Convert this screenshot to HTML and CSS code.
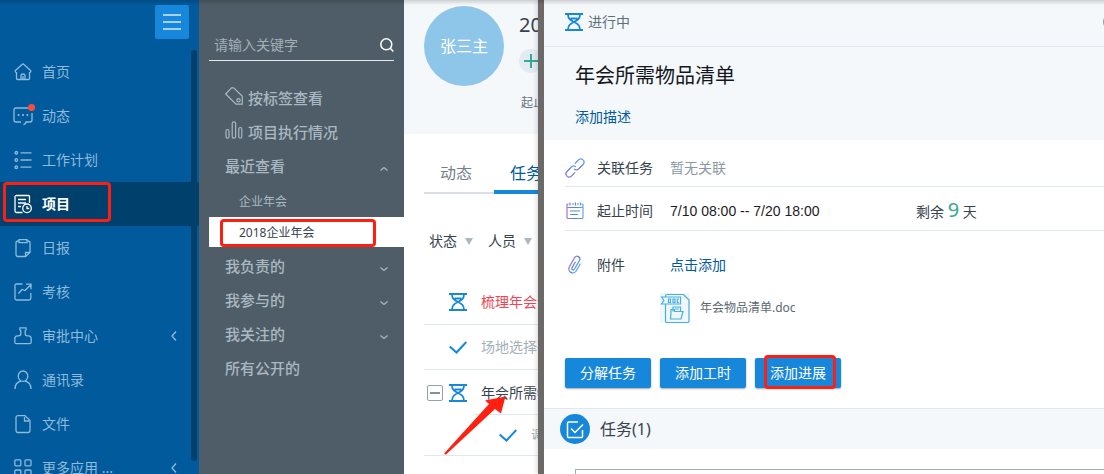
FILE: index.html
```html
<!DOCTYPE html>
<html lang="zh-CN">
<head>
<meta charset="utf-8">
<title>项目</title>
<link rel="stylesheet" href="styles.css">
</head>
<body>
<svg class="defs" aria-hidden="true">
  <symbol id="hourglass" viewBox="0 0 18 18"><path d="M0 1h18M0 17h18M3 1.500c0 9 12 6 12 15M15 1.500c0 9-12 6-12 15M5.500 5.500h7" fill="none" stroke="currentColor" stroke-width="1.800"/></symbol>
  <symbol id="check" viewBox="0 0 18 18"><path d="M.7 8.500l6.800 6L17.300 4" fill="none" stroke="currentColor" stroke-width="2"/></symbol>
  <symbol id="left" viewBox="0 0 6 10"><path d="M5 .5L1 5l4 4.500" fill="none" stroke="currentColor" stroke-width="1.300"/></symbol>
  <symbol id="down" viewBox="0 0 8 8"><path d="M.5 2.500l3.500 3 3.500-3" fill="none" stroke="currentColor" stroke-width="1.300"/></symbol>
</svg>
<div class="app">
  <aside class="sidebar">
    <div class="sidebar-top">
      <button class="menu-btn" type="button" aria-label="菜单"><span></span><span></span><span></span></button>
    </div>
    <nav class="nav">
      <a class="nav-item" href="#"><svg class="nav-icon" viewBox="0 0 18 18"><path d="M8 1.500q1-1 2 0l6.500 6q.8 1-.3 1.800l-.7.400v5.800q0 1-1 1H3.500q-1 0-1-1V9.700l-.7-.4q-1.100-.8-.3-1.800zM7 16.500v-4q0-1.500 2-1.500t2 1.500v4M9 13v3"/></svg>首页</a>
      <a class="nav-item" href="#"><svg class="nav-icon wide" viewBox="0 0 20 18"><path d="M15 1H3Q1 1 1 3v10q0 2 2 2h5M19 6v7q0 2-2 2h-4q0 2-2.500 2.500"/><path class="dots" d="M5.500 8h.1M10 8h.1M14.300 8h.1"/></svg>动态<span class="dot"></span></a>
      <a class="nav-item" href="#"><svg class="nav-icon" viewBox="0 0 18 18"><circle cx="2.300" cy="1.800" r="1.300"/><circle cx="2.300" cy="9" r="1.300"/><circle cx="2.300" cy="16.200" r="1.300"/><path d="M6.500 1.800h11M6.500 9h11M6.500 16.200h11"/></svg>工作计划</a>
      <a class="nav-item active" href="#"><svg class="nav-icon" viewBox="0 0 18 18"><path d="M15.500 8V1.500q0-1-1-1h-12q-1.500 0-1.500 1.500v14q0 1.500 1.500 1.500h6M4 4.500h8M4 8h8M4 11.500h3"/><circle cx="13" cy="13.300" r="4.300"/><path d="M13 11v2.500h2.200"/></svg>项目<span class="mark mark-nav"></span></a>
      <a class="nav-item" href="#"><svg class="nav-icon" viewBox="0 0 18 18"><path d="M5 2H4Q2 2 2 4v11.500q0 2 2 2h7.500l4.500-4V4q0-2-2-2h-1M5 .7h8v3H5zM11.500 17v-3.500H16"/></svg>日报</a>
      <a class="nav-item" href="#"><svg class="nav-icon" viewBox="0 0 18 18"><path d="M8.500 1H2.500Q1 1 1 2.500v13Q1 17 2.500 17h12.500q1.800 0 1.800-1.500V10M4.500 10.500L8 6.500l3 1L17 1.500M12 1.200h5v5"/></svg>考核</a>
      <a class="nav-item" href="#"><svg class="nav-icon" viewBox="0 0 18 18"><path d="M6 .8h6q1 1.500-.8 3v2.700q0 2.300 2 2.300h1.300q2.700 0 2.700 3V15q0 1.700-1.700 1.700h-13Q.8 16.700.8 15v-3.200q0-3 2.700-3h1.300q2 0 2-2.300V3.800Q5 2.300 6 .8z"/></svg>审批中心<svg class="nav-arrow"><use href="#left"/></svg></a>
      <a class="nav-item" href="#"><svg class="nav-icon" viewBox="0 0 18 18"><ellipse cx="9" cy="5.200" rx="4.800" ry="5.200"/><path d="M1 18q0-6.500 6-8M17 18q0-6.500-6-8"/></svg>通讯录</a>
      <a class="nav-item" href="#"><svg class="nav-icon" viewBox="0 0 18 18"><path d="M11 .6H4Q2 .6 2 2.600v13q0 1.900 2 1.900h10q2 0 2-1.900V5.500zM10.500 2v4H15"/></svg>文件</a>
      <a class="nav-item" href="#"><svg class="nav-icon" viewBox="0 0 18 18"><rect x=".8" y=".8" width="6" height="6" rx="1"/><rect x="11" y=".8" width="6" height="6" rx="1"/><rect x=".8" y="11" width="6" height="6" rx="1"/><rect x="11" y="11" width="6" height="6" rx="1"/></svg>更多应用 ...<svg class="nav-arrow"><use href="#left"/></svg></a>
    </nav>
    <span class="scrollbar"></span>
  </aside>

  <aside class="submenu">
    <form class="search">
      <input type="text" placeholder="请输入关键字" aria-label="搜索关键字">
      <button type="button" aria-label="搜索"><svg viewBox="0 0 14 14"><circle cx="6.300" cy="6.300" r="5.500"/><path d="M10.300 10.300L13.300 13.500"/></svg></button>
    </form>
    <nav class="groups">
      <a class="group" href="#"><svg class="group-icon" viewBox="0 0 18 18"><path d="M.7 7L6.500.8h2.200l8.600 8.500v7.900H11z"/><circle cx="13.500" cy="13.300" r="1.700"/></svg>按标签查看</a>
      <a class="group" href="#"><svg class="group-icon" viewBox="0 0 18 18"><rect x="1" y="8.500" width="3" height="8.700" rx="1.500"/><rect x="7.200" y=".8" width="3.400" height="16.400" rx="1.600"/><rect x="13.800" y="6.500" width="3" height="10.700" rx="1.500"/></svg>项目执行情况</a>
      <a class="group" href="#">最近查看<svg class="chev up"><use href="#down"/></svg></a>
      <div class="recent">
        <a href="#">企业年会</a>
        <a class="selected" href="#">2018企业年会<span class="mark mark-sub"></span></a>
      </div>
      <a class="group" href="#">我负责的<svg class="chev"><use href="#down"/></svg></a>
      <a class="group" href="#">我参与的<svg class="chev"><use href="#down"/></svg></a>
      <a class="group" href="#">我关注的<svg class="chev"><use href="#down"/></svg></a>
      <a class="group" href="#">所有公开的</a>
    </nav>
  </aside>

  <main class="project">
    <header class="project-head">
      <div class="avatar">张三主</div>
      <div class="project-info">
        <h1>2018</h1>
        <button class="add" type="button" aria-label="添加"></button>
        <p>起止</p>
      </div>
    </header>
    <nav class="tabs"><a href="#">动态</a><a class="current" href="#">任务</a></nav>
    <div class="filters"><button type="button">状态</button><button type="button">人员</button></div>
    <ul class="tasks">
      <li><svg class="state"><use href="#hourglass"/></svg><span class="late">梳理年会流</span></li>
      <li><svg class="state"><use href="#check"/></svg><span class="done">场地选择确</span></li>
      <li class="parent"><button class="collapse" type="button" aria-label="收起"></button><svg class="state"><use href="#hourglass"/></svg><span>年会所需物</span>
        <svg class="pointer" viewBox="0 0 64 60"><path d="M.5 57L45 8 41 4.500 61.500.5 57 17.500 51 13 2 58.500Q0 59 .5 57z"/></svg></li>
      <li class="child"><svg class="state"><use href="#check"/></svg><span class="done">调</span></li>
    </ul>
  </main>

  <section class="drawer">
    <header class="drawer-head"><svg class="state"><use href="#hourglass"/></svg><span>进行中</span><button class="close" type="button" aria-label="关闭"></button></header>
    <div class="summary">
      <h2>年会所需物品清单</h2>
      <a href="#">添加描述</a>
    </div>
    <svg class="defs" aria-hidden="true"><linearGradient id="tint" x1="0" y1="0" x2="1" y2="0"><stop offset="0" stop-color="#9a78dc"/><stop offset=".5" stop-color="#4f83d8"/><stop offset="1" stop-color="#68a6ec"/></linearGradient></svg>
    <dl class="fields">
      <div class="field linked">
        <dt><svg class="field-icon" viewBox="0 0 18 18"><g transform="rotate(-45 9 9)"><path d="M6 12.200H.8a3.200 3.200 0 0 1 0-6.400h6.400a3.200 3.200 0 0 1 3.200 3.200"/><path d="M12 5.800h5.200a3.200 3.200 0 0 1 0 6.400h-6.400A3.200 3.200 0 0 1 7.600 9"/></g></svg>关联任务</dt>
        <dd class="muted">暂无关联</dd>
      </div>
      <div class="field">
        <dt><svg class="field-icon" viewBox="0 0 18 18"><path d="M2.500 2H2Q1 2 1 3v12.500q0 1 1 1h14q1 0 1-1V3q0-1-1-1h-.5M6 2h2M11 2h2M4 .5v3M9.500.5v3M14.500.5v3M1 5.500h16M4 9h10M4 12.500h8"/></svg>起止时间</dt>
        <dd class="time">7/10 08:00 -- 7/20 18:00</dd>
        <dd class="left">剩余 <strong>9</strong> 天</dd>
      </div>
      <div class="field files">
        <dt><svg class="field-icon" viewBox="0 0 18 18"><path transform="rotate(30 9 9)" d="M13 5v8.500a4 4 0 0 1-8 0V2.800a2.800 2.800 0 0 1 5.600 0V13a1.400 1.400 0 0 1-2.800 0V6"/></svg>附件</dt>
        <dd><a href="#">点击添加</a></dd>
      </div>
    </dl>
    <div class="file">
      <svg viewBox="0 0 30 30"><path class="paper" d="M0 0h30v30H0z"/><path d="M5.500 4V3q0-1.500 1.500-1.500h16.500L29 7v21q0 1.500-1.500 1.500H7q-1.500 0-1.500-1.500V11.500M1.500 4h19v7h-19L4 7.500zM11 19.500v-3h3.500v2h8.500l-2 7.500H10.500zM13 18.500V14h7.500v4.500M15 16h4"/><path class="tag" d="M8.500 6h2v3.500h-2zM13 6h2v3.500h-2zM19 6h-1.700v3.500H19"/></svg>
      <span>年会物品清单.doc</span>
    </div>
    <div class="actions">
      <button type="button">分解任务</button>
      <button type="button">添加工时</button>
      <button type="button">添加进展<span class="mark mark-btn"></span></button>
    </div>
    <div class="section-head">
      <svg viewBox="0 0 30 30"><circle cx="15" cy="15" r="15"/><path d="M18 8H8.500q-1 0-1 1v13.500q0 1 1 1h13q1 0 1-1V16M11 14.500l4 4 8-8"/></svg>
      <h3>任务(1)</h3>
    </div>
    <input class="new-task" type="text" aria-label="任务名称">
  </section>
</div>
</body>
</html>
```
FILE: styles.css
```css
* { box-sizing: border-box; }
body, h1, h2, h3, p, ul, dl, dd { margin: 0; padding: 0; }
body { font: 14px/20px "Noto Sans", "Noto Sans CJK SC", sans-serif; color: #36434d; background: #fff; overflow: hidden; }
a { color: inherit; text-decoration: none; }
button, input { font: inherit; color: inherit; border: 0; padding: 0; background: none; }
ul { list-style: none; }
h1, h2, h3, strong { font-weight: 400; }
svg { flex: none; }
.defs { position: absolute; width: 0; height: 0; }

.app { position: relative; display: grid; grid-template-columns: 199px 205px 134px 1fr; height: 100vh; overflow: hidden; }
.app::after { content: ""; position: absolute; z-index: 2; inset: 0 0 auto; height: 5px; background: linear-gradient(rgba(0, 0, 0, .16), transparent); }

/* Primary navigation */
.sidebar { position: relative; background: #005a9b; color: #8fbbdc; overflow: hidden; }
.sidebar-top { display: flex; justify-content: flex-end; height: 50px; padding: 5px 10px 0 0; }
.menu-btn { display: flex; flex-direction: column; align-items: center; justify-content: center; gap: 5px; width: 34px; height: 34px; border-radius: 2px; background: #1787dc; }
.menu-btn span { width: 18px; height: 2px; background: #a5d2f3; }
.nav-item { position: relative; display: flex; align-items: center; gap: 10px; height: 44px; padding: 0 22px 0 14px; }
.nav-icon { width: 18px; height: 18px; overflow: visible; fill: none; stroke: currentColor; stroke-width: 1.3; }
.nav-icon.wide { width: 20px; margin: 0 -1px; }
.nav-icon .dots { stroke-width: 2; stroke-linecap: round; }
.nav-item.active { background: #00406d; color: #fff; font-weight: 700; }
.nav-arrow { width: 6px; height: 10px; margin-left: auto; }
.dot { position: absolute; left: 28px; top: 10px; width: 7px; height: 7px; border-radius: 50%; background: #ff4b3e; }
.scrollbar { position: absolute; right: 2px; top: 50px; bottom: 13px; width: 6px; border-radius: 3px; background: #00406b; }
.mark { position: absolute; border: 3px solid #ff1e12; border-radius: 4px; }
.mark-nav { left: 3px; top: 0; width: 108px; height: 40px; }
.mark-sub { left: 11px; top: 2px; width: 156px; height: 28px; }
.mark-btn { left: 9px; right: 5px; top: -3px; bottom: -1px; }

/* Project list */
.submenu { padding-left: 10px; background: #4e5d67; color: #a9b8c1; }
.search { display: flex; align-items: center; height: 31px; margin: 30px 10px 20px 0; padding-left: 5px; border-bottom: 1px solid #e4e8ea; }
.search input { flex: 1; min-width: 0; outline: 0; }
.search input::placeholder { color: #a3b0b8; opacity: 1; }
.search button { display: flex; }
.search svg { width: 14px; height: 14px; fill: none; stroke: #fff; stroke-width: 1.5; }
.group { display: flex; align-items: center; gap: 5px; height: 34px; padding: 0 16px 0 16px; font-size: 15px; font-weight: 500; }
.group-icon { width: 18px; height: 18px; margin-bottom: 4px; fill: none; stroke: currentColor; stroke-width: 1.2; }
.chev { width: 8px; height: 8px; margin: 6px 0 0 auto; }
.chev.up { transform: rotate(180deg); }
.recent { padding: 4px 0 2px; font-size: 12px; }
.recent a { position: relative; display: block; padding-left: 30px; line-height: 30px; }
.recent .selected { padding-top: 2px; line-height: 28px; background: #fff; color: #36434d; }

/* Project page */
.project { overflow: hidden; white-space: nowrap; }
.project-head { display: flex; gap: 15px; height: 134px; padding: 6px 0 0 20px; background: #f4f8fb; }
.avatar { flex: none; display: grid; place-items: center; width: 80px; height: 80px; border-radius: 50%; background: #8dc6e9; color: #fff; font-size: 16px; }
.project-info { min-width: 0; overflow: hidden; }
.project-info h1 { height: 43px; font-size: 20px; line-height: 38px; }
.add { display: block; width: 24px; height: 24px; border-radius: 50%; background: linear-gradient(#38a893, #38a893) center / 14px 2px no-repeat, linear-gradient(#38a893, #38a893) center / 2px 14px no-repeat, #e3ebf2; }
.project-info p { padding: 20px 0 0 2px; font-size: 12px; color: #65727c; }
.tabs { display: flex; height: 60px; padding: 20px 0 0 20px; font-size: 16px; color: #75818a; }
.tabs a { flex: none; width: 70px; padding-left: 16px; line-height: 38px; border-bottom: 2px solid #dae0e5; }
.tabs .current { color: #005a9b; border-bottom: 4px solid #1787dc; }
.filters { display: flex; gap: 15px; height: 86px; padding: 37px 0 0 25px; }
.filters button { flex: none; display: flex; align-items: center; gap: 8px; height: 20px; }
.filters button::after { content: ""; border: 4px solid transparent; border-top: 7px solid #a9b8c1; border-bottom: 0; }
.tasks { padding-left: 20px; }
.tasks li { position: relative; display: flex; align-items: center; height: 45px; padding-left: 25px; border-bottom: 1px solid #dfe8ee; }
.state { width: 18px; height: 18px; margin-right: 14px; color: #1787dc; }
.tasks .late { color: #f04552; }
.tasks .done { color: #a3b0b8; }
.tasks .parent { padding-left: 3px; border-bottom: 0; }
.tasks .child { height: 41px; padding-left: 75px; font-size: 12px; }
.child::before { content: ""; position: absolute; left: 50px; right: 0; top: -1px; border-top: 1px solid #dfe8ee; }
.collapse { flex: none; width: 16px; height: 16px; margin-right: 6px; border: 1px solid #91a2ac; border-radius: 2px; background: linear-gradient(#81929d, #81929d) center / 10px 2px no-repeat; }
.pointer { position: absolute; z-index: 1; left: 20px; top: 26px; width: 64px; height: 60px; fill: #ff2012; }

/* Task drawer */
.drawer { border-left: 6px solid #6c6a68; background: #fff; overflow: hidden; box-shadow: -2px 0 4px rgba(0, 0, 0, .12); z-index: 1; }
.drawer-head { display: flex; align-items: center; height: 47px; padding: 0 0 2px 21px; border-bottom: 1px solid #dfe8ee; background: #f4f8fb; color: #63707a; }
.drawer-head .state { margin-right: 5px; }
.close { width: 16px; height: 16px; margin: 0 -15px 0 auto; flex: none; border: 2px solid #9a9a9a; border-radius: 50%; }
.summary { height: 93px; padding: 14px 31px 0; background: #f4f8fb; }
.summary h2 { color: #12171b; font-size: 20px; line-height: 30px; }
.summary a { display: block; padding-top: 16px; }
.summary a, .files a { color: #005a9b; }
.fields { padding-left: 21px; }
.field { display: flex; align-items: center; height: 44px; padding-top: 4px; border-bottom: 1px solid #dfe8ee; }
.field.linked { height: 47px; padding-top: 10px; }
.field.files { height: 62px; padding-top: 6px; border: 0; }
.field dt { display: flex; align-items: center; width: 105px; }
.field-icon { width: 18px; height: 18px; margin: 0 13px 0 1px; overflow: visible; fill: none; stroke: url(#tint); stroke-width: 1.2; }
.muted { color: #8c99a2; }
.time { width: 246px; color: #1c2024; font-family: "Liberation Sans", sans-serif; }
.left strong { font: 20px/20px "Noto Sans", sans-serif; color: #38a893; }
.file { display: flex; align-items: center; gap: 10px; padding-left: 116px; font-size: 12px; color: #5d6a74; }
.file svg { width: 30px; height: 30px; fill: none; stroke: #43b2dc; stroke-width: 1.2; }
.file .paper { fill: #f1f6f9; stroke: none; }
.actions { display: flex; gap: 9px; padding: 35px 21px 20px; }
.actions button { position: relative; width: 86px; height: 30px; border-radius: 2px; background: #1787dc; color: #fff; box-shadow: 0 1px 2px rgba(0, 0, 0, .35); }
.section-head { display: flex; align-items: center; gap: 10px; height: 41px; padding-left: 16px; border-top: 1px solid #dfe8ee; background: #f4f8fb; }
.section-head svg { width: 30px; height: 30px; fill: #1787dc; }
.section-head path { fill: none; stroke: #fff; stroke-width: 1.5; }
.section-head h3 { font-size: 16px; }
.new-task { display: block; width: 100%; height: 34px; margin: 20px 0 0 31px; border: 1px solid #9eaeb7; }
```
